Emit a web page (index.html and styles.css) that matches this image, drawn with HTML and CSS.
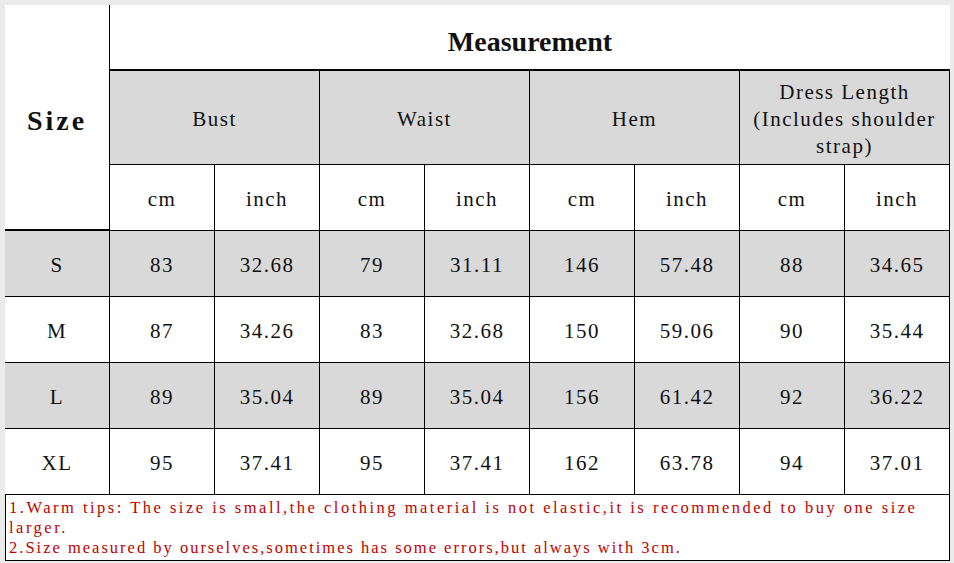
FILE: index.html
```html
<!DOCTYPE html>
<html lang="en">
<head>
<meta charset="utf-8">
<title>Size chart</title>
<link rel="stylesheet" href="styles.css">
</head>
<body>
<div class="sheet">
  <div class="grid">
    <div class="c size">Size</div>
    <div class="c title">Measurement</div>

    <div class="c hd span2">Bust</div>
    <div class="c hd span2">Waist</div>
    <div class="c hd span2">Hem</div>
    <div class="c hd span2 multi">Dress Length (Includes shoulder strap)</div>

    <div class="c">cm</div><div class="c">inch</div>
    <div class="c">cm</div><div class="c">inch</div>
    <div class="c">cm</div><div class="c">inch</div>
    <div class="c">cm</div><div class="c">inch</div>

    <div class="c g">S</div><div class="c g">83</div><div class="c g">32.68</div><div class="c g">79</div><div class="c g">31.11</div><div class="c g">146</div><div class="c g">57.48</div><div class="c g">88</div><div class="c g">34.65</div>
    <div class="c">M</div><div class="c">87</div><div class="c">34.26</div><div class="c">83</div><div class="c">32.68</div><div class="c">150</div><div class="c">59.06</div><div class="c">90</div><div class="c">35.44</div>
    <div class="c g">L</div><div class="c g">89</div><div class="c g">35.04</div><div class="c g">89</div><div class="c g">35.04</div><div class="c g">156</div><div class="c g">61.42</div><div class="c g">92</div><div class="c g">36.22</div>
    <div class="c">XL</div><div class="c">95</div><div class="c">37.41</div><div class="c">95</div><div class="c">37.41</div><div class="c">162</div><div class="c">63.78</div><div class="c">94</div><div class="c">37.01</div>

    <div class="notes">
      <p>1.Warm tips: The size is small,the clothing material is not elastic,it is recommended to buy one size larger.</p>
      <p class="tight">2.Size measured by ourselves,sometimes has some errors,but always with 3cm.</p>
    </div>
  </div>
</div>
</body>
</html>
```

FILE: styles.css
```css
* { box-sizing: border-box; }

html, body {
  margin: 0;
  padding: 0;
}

body {
  background: #ebebeb;
  width: 954px;
  height: 563px;
  overflow: hidden;
}

.sheet {
  padding: 5px 0 0 5px;
}

.grid {
  display: grid;
  grid-template-columns: repeat(9, 105px);
  grid-template-rows: 66px 94px repeat(6, 66px);
  width: 945px;
  background: #fff;
  font-family: "Liberation Serif", "Times New Roman", serif;
  font-size: 21px;
  letter-spacing: 1.5px;
  color: #111;
}

.c {
  display: flex;
  align-items: center;
  justify-content: center;
  text-align: center;
  border-right: 1px solid #000;
  border-bottom: 1px solid #000;
  background: #fff;
  line-height: 27px;
  padding-top: 3px;
}

.g, .hd { background: #d9d9d9; }

.size {
  grid-column: 1;
  grid-row: 1 / 4;
  border-bottom: 2px solid #000;
  font-weight: bold;
  font-size: 28px;
  letter-spacing: 3px;
  padding-top: 6px;
}

.title {
  grid-column: 2 / 10;
  grid-row: 1;
  border-right: none;
  border-bottom: 2px solid #000;
  font-weight: bold;
  font-size: 28px;
  letter-spacing: 0;
  padding-top: 8px;
}

.span2 { grid-column: span 2; }

.multi { padding: 3px 2px 0; }

.notes {
  grid-column: 1 / 10;
  border: 1px solid #000;
  border-top: none;
  background: #fff;
  color: #c00000;
  font-size: 16.5px;
  letter-spacing: 2.5px;
  line-height: 20px;
  padding: 1px 4px 0 3px;
  display: flex;
  flex-direction: column;
  justify-content: center;
}

.notes p { margin: 0; }

.notes .tight { letter-spacing: 2px; }
```
